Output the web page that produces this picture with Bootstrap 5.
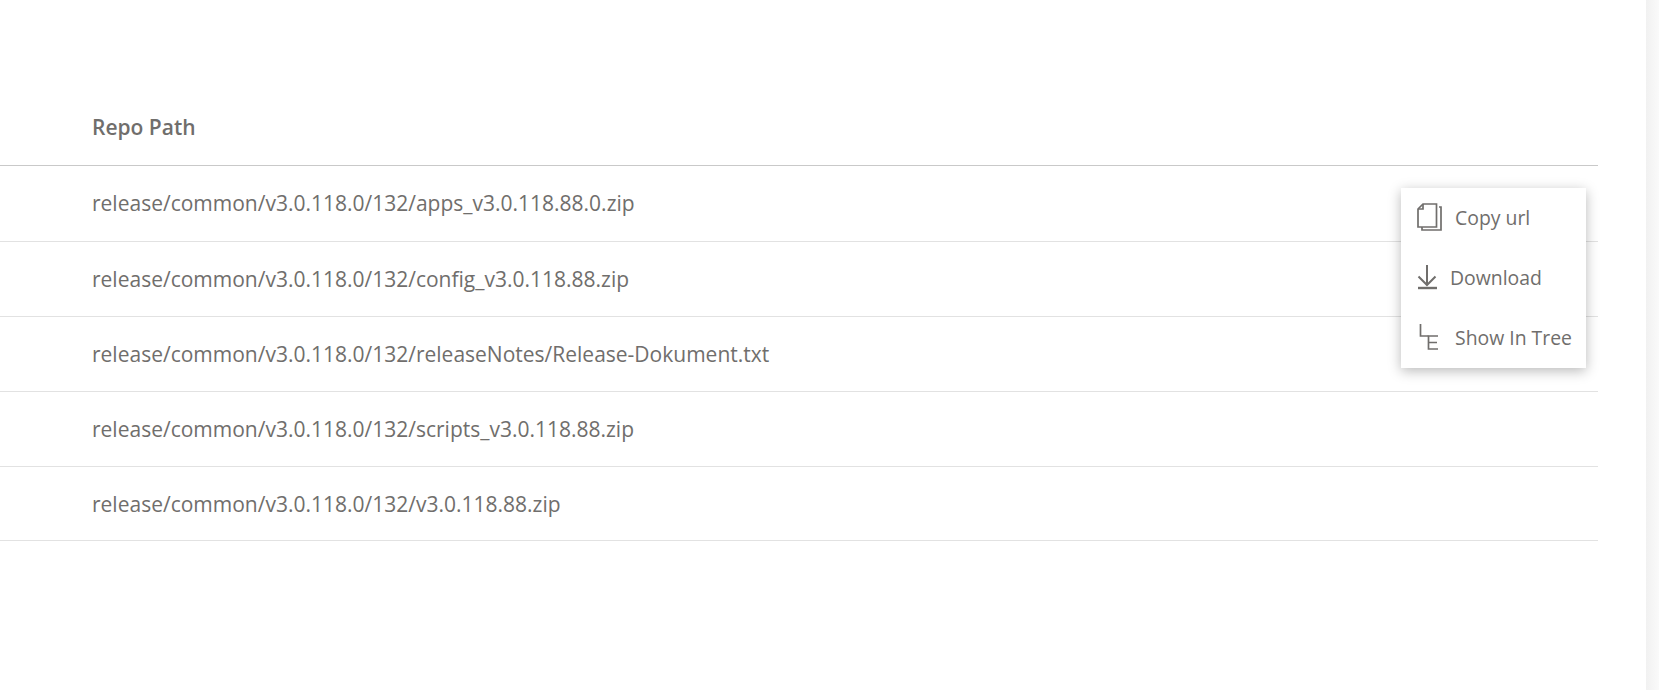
<!DOCTYPE html>
<html lang="en">
<head>
<meta charset="utf-8">
<title>Repo Path</title>
<link rel="stylesheet" href="https://cdn.jsdelivr.net/npm/bootstrap@5.3.0/dist/css/bootstrap.min.css">
<style>
html,body{height:690px;overflow:hidden;background:#fff}
body{font-family:"Open Sans",sans-serif;color:#706e6c}
.shell{display:flex;height:690px}
.main-area{flex:1 1 auto;min-width:0;padding-top:90px;padding-right:48px;position:relative}
.side-rail{flex:0 0 13px;background:linear-gradient(90deg,#f1f1f1,#fafafa)}
.repo-table{margin:0;width:100%;--bs-table-color:#706e6c;--bs-table-bg:transparent;font-size:21px}
.repo-table th{font-weight:600;color:#706e6c;height:75px;padding:0 0 0 92px;vertical-align:middle;border-bottom:1px solid #c9c9c9}
.repo-table td{height:75px;padding:2px 0 0 92px;vertical-align:middle;border-bottom:1px solid #e2e2e2;color:#706e6c}
.repo-table tbody tr:first-child td{height:76px}
.repo-table tbody tr:last-child td{height:74px;padding-top:4px}
.ctx-menu{display:block;position:absolute;left:1401px;top:188px;width:185px;height:180px;margin:0;padding:0;border:0;border-radius:0;background:#fff;box-shadow:0 3px 12px rgba(0,0,0,.28);font-size:19.4px}
.ctx-menu .dropdown-item{display:flex;align-items:center;height:60px;padding:0 0 0 16px;color:#706e6c;white-space:nowrap}
.ctx-menu svg{flex:none;stroke:#706e6c;fill:none;stroke-width:1.7}
.gap-copy{margin-right:13px;margin-top:-2px}
.gap-down{margin-right:13px}
.gap-tree{margin-right:14px}
</style>
</head>
<body>
<div class="shell">
  <main class="main-area">
    <table class="table repo-table">
      <thead><tr><th>Repo Path</th></tr></thead>
      <tbody>
        <tr><td>release/common/v3.0.118.0/132/apps_v3.0.118.88.0.zip</td></tr>
        <tr><td>release/common/v3.0.118.0/132/config_v3.0.118.88.zip</td></tr>
        <tr><td>release/common/v3.0.118.0/132/releaseNotes/Release-Dokument.txt</td></tr>
        <tr><td>release/common/v3.0.118.0/132/scripts_v3.0.118.88.zip</td></tr>
        <tr><td>release/common/v3.0.118.0/132/v3.0.118.88.zip</td></tr>
      </tbody>
    </table>
    <ul class="dropdown-menu ctx-menu list-unstyled">
      <li><a class="dropdown-item" href="#"><svg class="gap-copy" width="25" height="28" viewBox="0 0 25 28"><path d="M6 1H19.5V24H1V6Z"/><path d="M6 1V6H1"/><path d="M22 4H24V27H5V24"/></svg>Copy url</a></li>
      <li><a class="dropdown-item" href="#"><svg class="gap-down" width="20" height="26" viewBox="0 0 20 26"><path d="M10 0V20M1.5 11.5L10 20L18.5 11.5" stroke-width="2"/><path d="M1 23H20" stroke-width="2.4"/></svg>Download</a></li>
      <li><a class="dropdown-item" href="#"><svg class="gap-tree" width="24" height="28" viewBox="0 0 24 28"><path d="M3.5 0V12H11.5"/><path d="M21 12H11.5V25H21M11.5 18.5H20"/></svg>Show In Tree</a></li>
    </ul>
  </main>
  <div class="side-rail"></div>
</div>
</body>
</html>
